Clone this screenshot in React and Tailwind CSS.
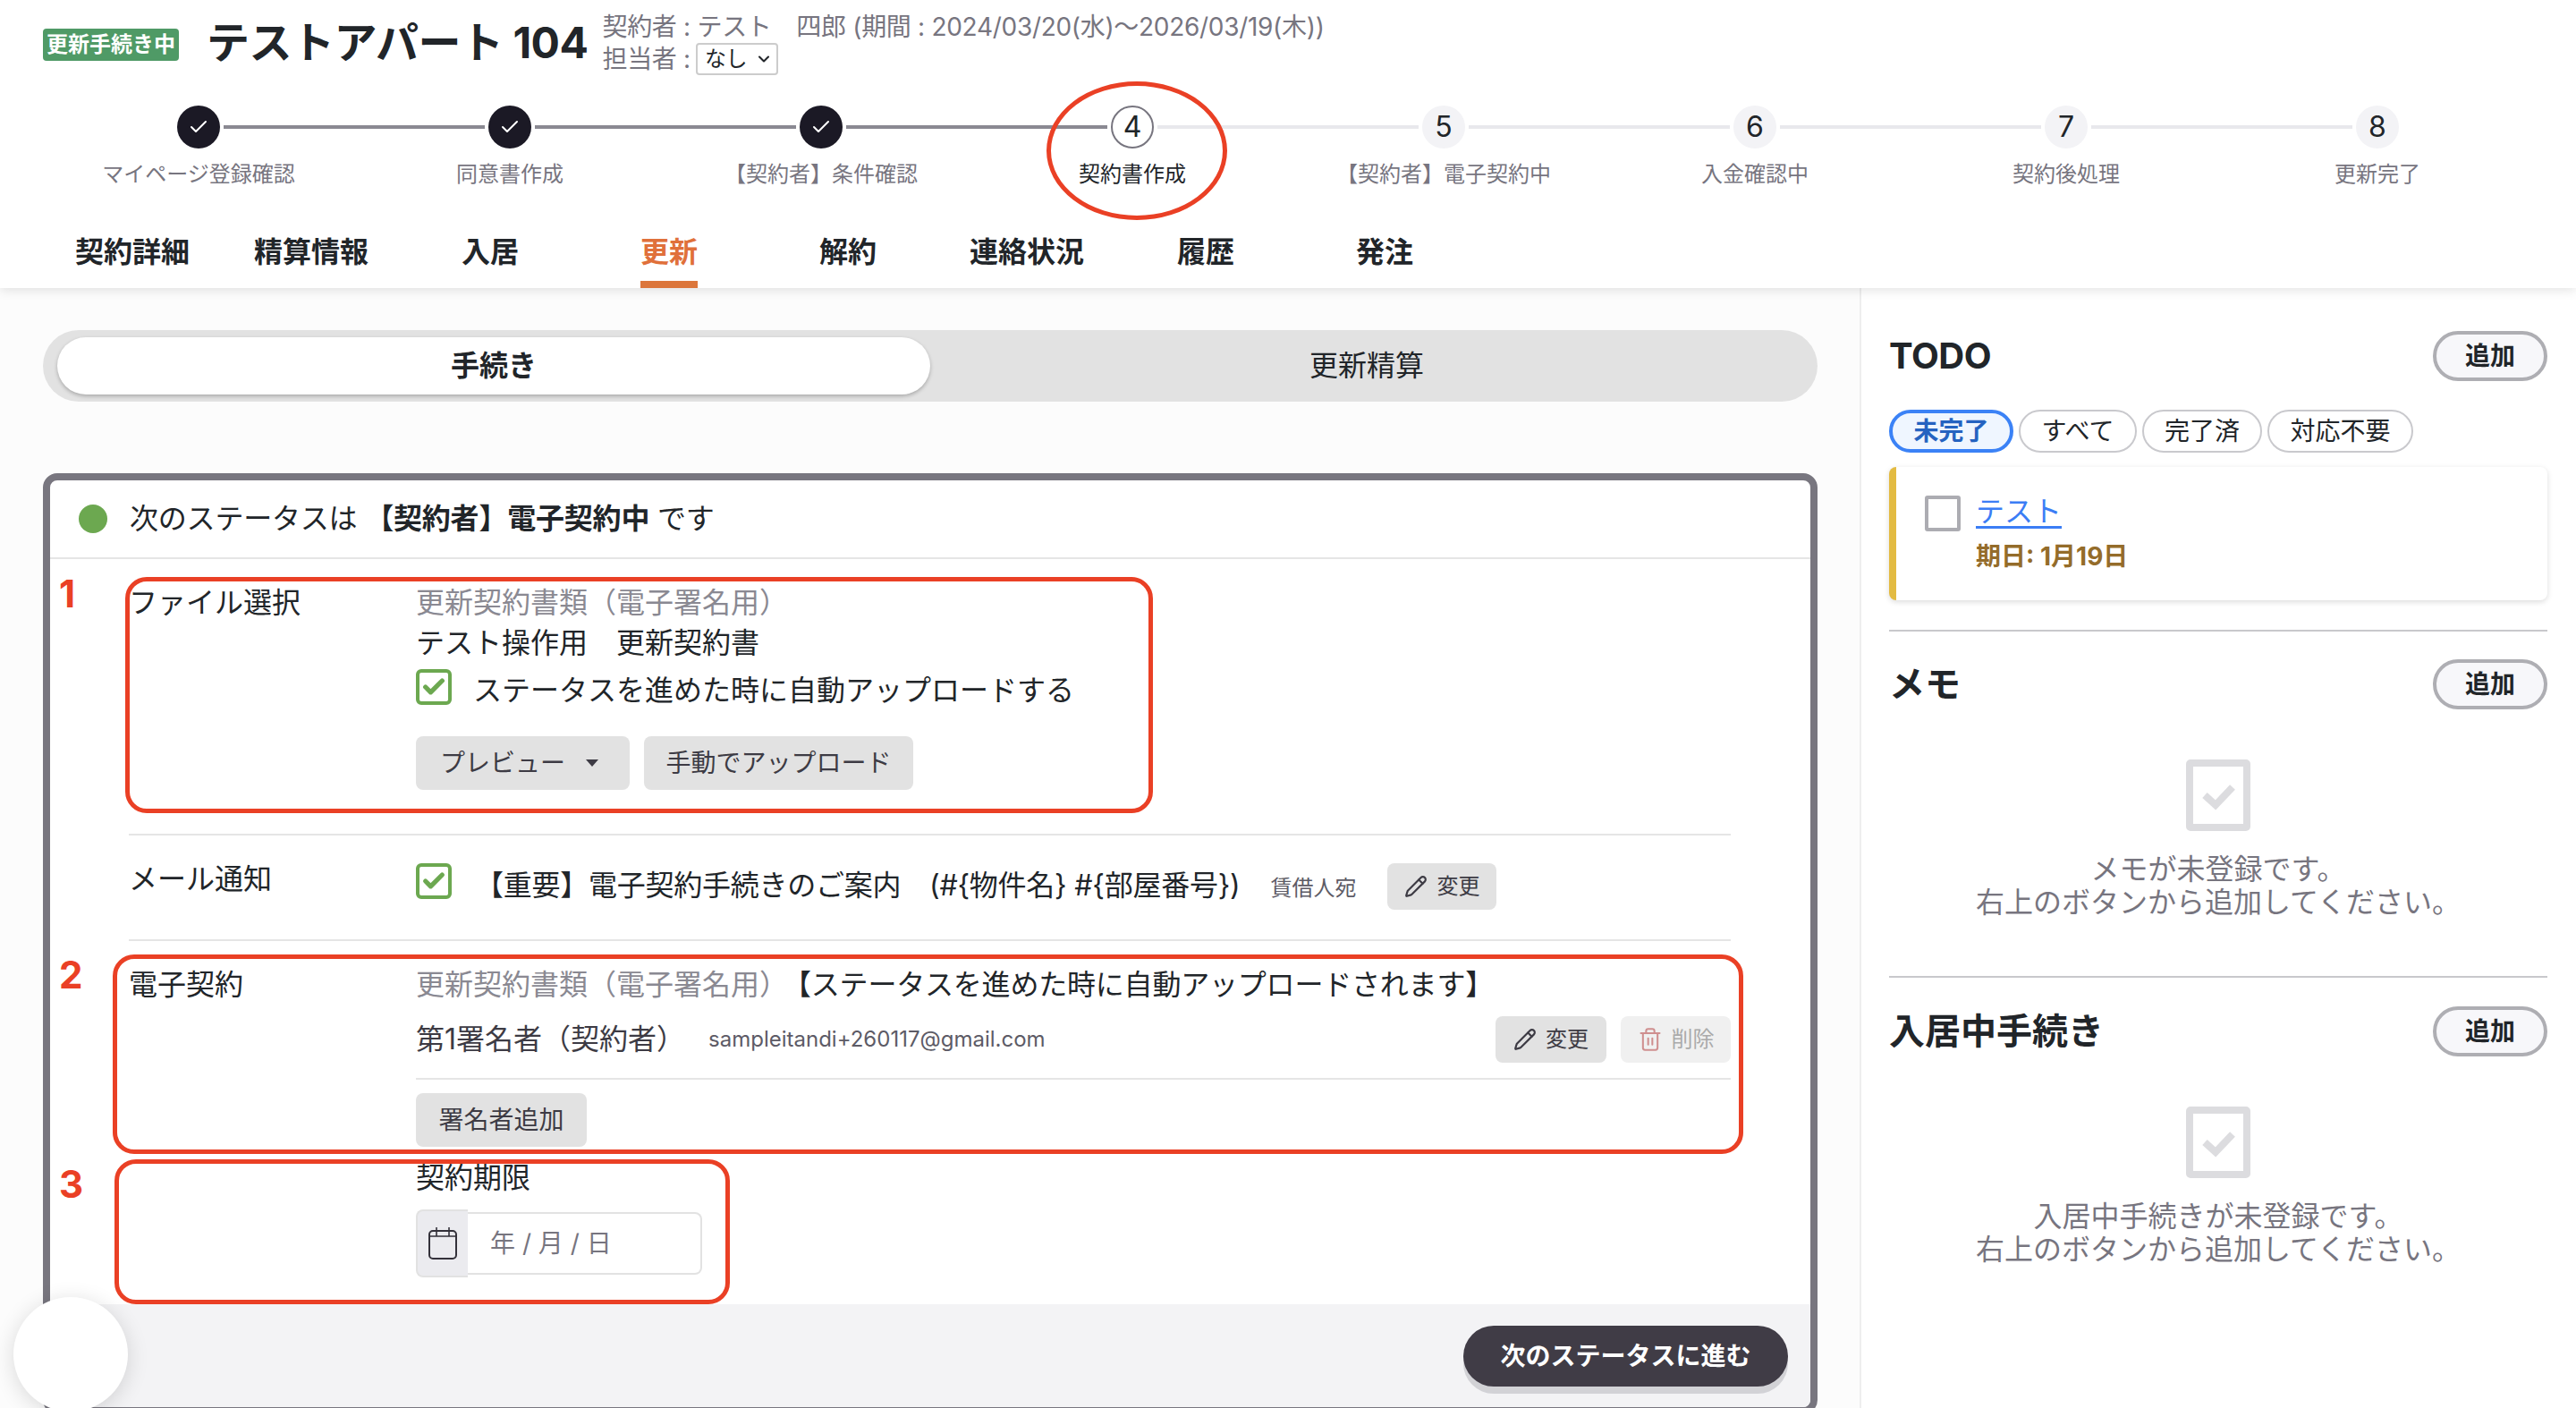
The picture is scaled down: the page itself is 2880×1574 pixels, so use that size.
import { Check, ChevronDown, Pencil, Trash2 } from "lucide-react";

const steps = [
  { label: "マイページ登録確認", state: "done" },
  { label: "同意書作成", state: "done" },
  { label: "【契約者】条件確認", state: "done" },
  { label: "契約書作成", state: "current" },
  { label: "【契約者】電子契約中", state: "todo" },
  { label: "入金確認中", state: "todo" },
  { label: "契約後処理", state: "todo" },
  { label: "更新完了", state: "todo" },
];

const tabs = ["契約詳細", "精算情報", "入居", "更新", "解約", "連絡状況", "履歴", "発注"];

function Step({ step, index }) {
  const leftColor = index === 0 ? "bg-transparent" : index <= 3 ? "bg-[#8a8992]" : "bg-[#e8e8ec]";
  const rightColor = index === 7 ? "bg-transparent" : index <= 2 ? "bg-[#8a8992]" : "bg-[#e8e8ec]";
  return (
    <div className="flex flex-col items-center">
      <div className="flex w-full items-center gap-1">
        <div className={`h-1 flex-1 ${leftColor}`} />
        {step.state === "done" && (
          <div className="flex h-12 w-12 items-center justify-center rounded-full bg-[#1b1925] text-white">
            <Check size={24} strokeWidth={2} />
          </div>
        )}
        {step.state === "current" && (
          <div className="flex h-12 w-12 items-center justify-center rounded-full border-2 border-[#77757f] bg-white text-[32px] text-[#212529]">
            {index + 1}
          </div>
        )}
        {step.state === "todo" && (
          <div className="flex h-12 w-12 items-center justify-center rounded-full bg-[#f3f3f6] text-[32px] text-[#212529]">
            {index + 1}
          </div>
        )}
        <div className={`h-1 flex-1 ${rightColor}`} />
      </div>
      <div
        className={`mt-[11px] text-[24px] leading-[36px] ${
          step.state === "current" ? "text-[#212529]" : "text-[#77757f]"
        }`}
      >
        {step.label}
      </div>
    </div>
  );
}

function GrayButton({ children, className = "" }) {
  return (
    <div className={`flex items-center justify-center rounded-lg bg-[#e2e2e2] text-[#3d3b44] ${className}`}>
      {children}
    </div>
  );
}

function GreenCheck() {
  return (
    <div className="flex h-10 w-10 shrink-0 items-center justify-center rounded-md border-4 border-[#6ca850] bg-white text-[#6ca850]">
      <Check size={28} strokeWidth={4.5} />
    </div>
  );
}

function AddButton() {
  return (
    <div className="flex h-14 w-32 items-center justify-center rounded-full border-4 border-[#aeaeb3] bg-[#f7f7fa] text-[28px] font-bold text-[#212529]">
      追加
    </div>
  );
}

function EmptyState({ lead }) {
  return (
    <div className="flex flex-col items-center">
      <svg width="72" height="80" viewBox="0 0 72 80" fill="none">
        <rect x="4" y="4" width="64" height="72" rx="1" stroke="#dcdcdf" strokeWidth="8" />
        <path d="M21 40 L33 51 L52 31" stroke="#dcdcdf" strokeWidth="8" />
      </svg>
      <div className="mt-6 text-center text-[32px] leading-[37px] text-[#77757f]">
        <div>{lead}</div>
        <div>右上のボタンから追加してください。</div>
      </div>
    </div>
  );
}

// 赤枠と番号はスクリーンショット上の注釈
function Annotations() {
  return (
    <div className="absolute left-0 top-0 z-20">
      <div className="absolute left-[1170px] top-[91px] h-[155px] w-[202px] rounded-[50%] border-[5px] border-[#ea4025]" />
      <div className="absolute left-[140px] top-[645px] h-[264px] w-[1149px] rounded-[24px] border-[5px] border-[#ea4025]" />
      <div className="absolute left-[126px] top-[1067px] h-[223px] w-[1823px] rounded-[24px] border-[5px] border-[#ea4025]" />
      <div className="absolute left-[128px] top-[1296px] h-[162px] w-[688px] rounded-[24px] border-[5px] border-[#ea4025]" />
      <div className="absolute left-[66px] top-[640px] text-[42px] font-bold leading-[48px] text-[#ea4025]">1</div>
      <div className="absolute left-[66px] top-[1066px] text-[42px] font-bold leading-[48px] text-[#ea4025]">2</div>
      <div className="absolute left-[66px] top-[1300px] text-[42px] font-bold leading-[48px] text-[#ea4025]">3</div>
    </div>
  );
}

export default function App() {
  return (
    <div className="relative flex h-[1574px] w-full flex-col overflow-hidden bg-white font-['Inter','Noto_Sans_CJK_JP',sans-serif] text-[#212529]">
      <header className="relative z-10 h-[322px] shrink-0 bg-white shadow-[0_2px_12px_rgba(0,0,0,0.12)]">
        <div className="flex h-24 items-center px-12">
          <div className="mt-1 flex h-9 w-[152px] items-center justify-center rounded bg-[#4f9a66] text-[24px] font-bold text-white">
            更新手続き中
          </div>
          <div className="ml-[31px] text-[48px] font-bold leading-none tracking-[-0.5px]">テストアパート 104</div>
          <div className="ml-4 text-[28px] leading-9 tracking-[-0.3px] text-[#77757f]">
            <div>契約者 : テスト　四郎 (期間 : 2024/03/20(水)〜2026/03/19(木))</div>
            <div className="flex items-center gap-[6px]">
              担当者 :
              <div className="flex h-9 w-[92px] items-center justify-between rounded border-2 border-[#cccccc] bg-white pl-2 pr-1 text-[24px] text-[#212529]">
                なし
                <ChevronDown size={20} strokeWidth={2.5} />
              </div>
            </div>
          </div>
        </div>

        <div className="mt-[22px] grid grid-cols-8 px-12">
          {steps.map((step, i) => (
            <Step key={step.label} step={step} index={i} />
          ))}
        </div>

        <div className="absolute bottom-0 left-12 grid w-[1600px] grid-cols-8">
          {tabs.map((tab) => (
            <div key={tab} className="flex h-[76px] justify-center">
              <div
                className={`flex h-full items-center border-b-8 pt-1 text-[32px] font-bold ${
                  tab === "更新" ? "border-[#dc763b] text-[#e0703a]" : "border-transparent"
                }`}
              >
                {tab}
              </div>
            </div>
          ))}
        </div>
      </header>

      <div className="flex flex-1">
        <main className="w-[2079px] shrink-0 bg-[#fcfcfc] pl-12 pr-[47px] pt-[47px]">
          <div className="flex h-20 items-center rounded-full bg-[#e2e2e2] px-4 py-2 text-[32px]">
            <div className="flex h-16 flex-1 items-center justify-center rounded-full bg-white font-bold shadow-[0_2px_4px_rgba(0,0,0,0.25)]">
              手続き
            </div>
            <div className="flex h-16 flex-1 items-center justify-center">更新精算</div>
          </div>

          <div className="mt-20 flex h-[1052px] flex-col overflow-hidden rounded-2xl border-8 border-[#78767f] bg-white">
            <div className="flex h-[88px] shrink-0 items-center gap-[25px] border-b-2 border-[#e5e5e5] pl-8 text-[32px] tracking-[-0.2px]">
              <div className="h-8 w-8 rounded-full bg-[#6ca850]" />
              <div>
                次のステータスは <span className="font-bold">【契約者】電子契約中</span> です
              </div>
            </div>

            <div className="shrink-0 pl-[88px] pr-[89px] text-[32px] leading-10">
              <div className="flex h-[309px] border-b-2 border-[#e5e5e5] pt-[29px]">
                <div className="w-[321px] shrink-0">ファイル選択</div>
                <div>
                  <div className="text-[#8a8992]">更新契約書類（電子署名用）</div>
                  <div className="mt-[5px]">テスト操作用　更新契約書</div>
                  <div className="mt-[9px] flex items-start gap-[24px]">
                    <GreenCheck />
                    <div className="mt-1">ステータスを進めた時に自動アップロードする</div>
                  </div>
                  <div className="mt-[31px] flex gap-4 text-[28px]">
                    <GrayButton className="h-[60px] w-[239px] !justify-start pl-[27px]">
                      プレビュー
                      <svg className="ml-[23px]" width="14" height="8" viewBox="0 0 14 8">
                        <path d="M0 0H14L7 8Z" fill="#3d3b44" />
                      </svg>
                    </GrayButton>
                    <GrayButton className="h-[60px] w-[301px]">手動でアップロード</GrayButton>
                  </div>
                </div>
              </div>

              <div className="flex h-[118px] border-b-2 border-[#e5e5e5] pt-[29px]">
                <div className="w-[321px] shrink-0">メール通知</div>
                <div className="flex flex-1 items-start">
                  <div className="mt-[2px]">
                    <GreenCheck />
                  </div>
                  <div className="ml-[26px] mt-[7px] whitespace-nowrap tracking-[-0.25px]">【重要】電子契約手続きのご案内　(#{"{物件名}"} #{"{部屋番号}"})</div>
                  <div className="ml-[34px] mt-[10px] text-[24px] text-[#5d5b66]">賃借人宛</div>
                  <GrayButton className="ml-[35px] mt-[2px] h-[52px] w-[122px] gap-[10px] text-[24px]">
                    <Pencil size={26} strokeWidth={2} />
                    変更
                  </GrayButton>
                </div>
              </div>

              <div className="flex pt-[29px]">
                <div className="w-[321px] shrink-0">電子契約</div>
                <div className="flex-1">
                  <div className="whitespace-nowrap">
                    <span className="text-[#8a8992]">更新契約書類（電子署名用）</span>
                    <span className="ml-[10px] tracking-[-0.2px]">【ステータスを進めた時に自動アップロードされます】</span>
                  </div>
                  <div className="mt-[15px] flex h-[52px] items-center">
                    <div className="text-[#3d3b44]">第1署名者（契約者）</div>
                    <div className="ml-[26px] text-[24px] text-[#5d5b66]">sampleitandi+260117@gmail.com</div>
                    <GrayButton className="ml-auto h-[52px] w-[124px] gap-[10px] text-[24px]">
                      <Pencil size={26} strokeWidth={2} />
                      変更
                    </GrayButton>
                    <div className="ml-4 flex h-[52px] w-[123px] items-center justify-center gap-[10px] rounded-lg bg-[#f0f0f0] text-[24px] text-[#aaaaaa]">
                      <Trash2 size={28} strokeWidth={1.75} className="text-[#cf8f8f]" />
                      削除
                    </div>
                  </div>
                  <div className="mt-[17px] h-[2px] bg-[#e5e5e5]" />
                  <GrayButton className="mt-[15px] h-[60px] w-[191px] text-[28px]">署名者追加</GrayButton>
                </div>
              </div>

              <div className="mb-[30px] ml-[321px] mt-[15px]">
                <div>契約期限</div>
                <div className="mt-[15px] flex items-center">
                  <div className="flex h-[76px] w-[58px] items-center justify-center rounded-l-lg border-2 border-r-0 border-[#e2e2e2] bg-[#ebebef]">
                    <svg width="32" height="36" viewBox="0 0 32 36" fill="none" stroke="#33313a" strokeWidth="2">
                      <rect x="1" y="4" width="30" height="31" rx="4" />
                      <path d="M1 10H31M9 0V10M23 0V10" strokeWidth="1.6" />
                    </svg>
                  </div>
                  <div className="flex h-[70px] w-[262px] items-center rounded-r-lg border-2 border-l-0 border-[#e2e2e2] pl-[25px] text-[28px] text-[#77757f]">
                    年 / 月 / 日
                  </div>
                </div>
              </div>
            </div>

            <div className="flex flex-1 items-start justify-end bg-[#f3f3f5] pr-[25px] pt-6">
              <div className="flex h-[68px] w-[363px] items-center justify-center rounded-full bg-[#403c46] text-[28px] font-bold text-white shadow-[0_8px_0_#d2d2d6]">
                次のステータスに進む
              </div>
            </div>
          </div>
        </main>

        <aside className="flex-1 border-l-2 border-[#eeeeee] bg-white pl-[31px] pr-8 pt-12">
          <div className="flex items-center justify-between">
            <h2 className="text-[40px] font-bold leading-[56px] tracking-[-0.5px]">TODO</h2>
            <AddButton />
          </div>
          <div className="mt-8 flex gap-[6px] text-[28px] leading-none">
            <div className="flex h-12 w-[139px] items-center justify-center rounded-full border-4 border-[#3b82f6] bg-[#eff6ff] font-bold text-[#2563c0]">
              未完了
            </div>
            <div className="flex h-12 w-[132px] items-center justify-center rounded-full border-2 border-[#c9c9cd]">すべて</div>
            <div className="flex h-12 w-[134px] items-center justify-center rounded-full border-2 border-[#c9c9cd]">完了済</div>
            <div className="flex h-12 w-[163px] items-center justify-center rounded-full border-2 border-[#c9c9cd]">対応不要</div>
          </div>
          <div className="mt-4 flex h-[149px] gap-[17px] rounded-lg border-l-8 border-[#e3bb42] bg-white pl-8 pt-8 shadow-[0_2px_6px_rgba(0,0,0,0.14)]">
            <div className="h-10 w-10 rounded-[3px] border-4 border-[#acacb2]" />
            <div className="-mt-[2px]">
              <div className="text-[32px] leading-10 text-[#3b7df5] underline underline-offset-[5px]">テスト</div>
              <div className="mt-[10px] text-[28px] font-bold leading-10 text-[#946c2a]">期日: 1月19日</div>
            </div>
          </div>

          <div className="mt-[33px] h-[2px] bg-[#c8c8cc]" />
          <div className="mt-[31px] flex items-center justify-between">
            <h2 className="text-[40px] font-bold leading-[56px]">メモ</h2>
            <AddButton />
          </div>
          <div className="mt-14">
            <EmptyState lead="メモが未登録です。" />
          </div>

          <div className="mt-[64px] h-[2px] bg-[#c8c8cc]" />
          <div className="mt-8 flex items-center justify-between">
            <h2 className="text-[40px] font-bold leading-[56px]">入居中手続き</h2>
            <AddButton />
          </div>
          <div className="mt-14">
            <EmptyState lead="入居中手続きが未登録です。" />
          </div>
        </aside>
      </div>

      <Annotations />
      <div className="absolute left-[15px] top-[1450px] z-30 h-[128px] w-[128px] rounded-full bg-white shadow-[0_4px_24px_rgba(0,0,0,0.14)]" />
    </div>
  );
}
